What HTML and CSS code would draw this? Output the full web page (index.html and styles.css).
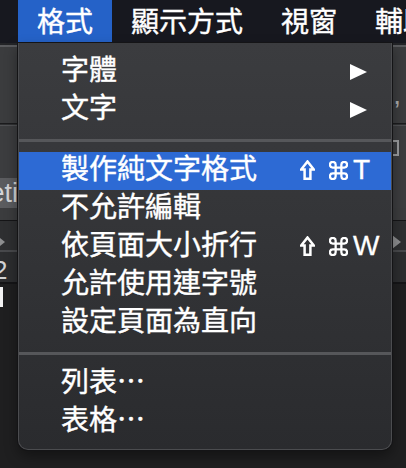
FILE: index.html
```html
<!DOCTYPE html>
<html lang="zh-Hant">
<head>
<meta charset="utf-8">
<title>格式</title>
<link rel="stylesheet" href="styles.css">
</head>
<body>
<div class="screen">
  <div class="menubar">
    <span class="mb-item active">格式</span>
    <span class="mb-item">顯示方式</span>
    <span class="mb-item">視窗</span>
    <span class="mb-item">輔助說明</span>
  </div>
  <div class="desk">
    <div class="bg">
      <div class="r r-top1"></div>
      <div class="r r-top2"></div>
      <div class="r r-tool"><span></span><span class="ghost num">3,</span></div>
      <div class="r r-l1"></div>
      <div class="r r-l2"></div>
      <div class="r r-l3"></div>
      <div class="r r-tool2"><span></span><span class="bracket"></span></div>
      <div class="r r-field"><span class="field">eti</span><span></span></div>
      <div class="r r-tool3"></div>
      <div class="r r-dark"></div>
      <div class="r r-ruler"><span class="tri tri-l"></span><span class="tri tri-r"></span></div>
      <div class="r r-l4"></div>
      <div class="r r-ruler2"><span class="ghost two">2</span><span></span></div>
      <div class="r r-l5"></div>
      <div class="r r-doc"><span class="caret"></span></div>
    </div>

    <div class="menu">
      <div class="item"><span class="label">字體</span><span class="key"><svg class="arrow" viewBox="0 0 17 16"><polygon points="0,0 17,8 0,16" /></svg></span></div>
      <div class="item"><span class="label">文字</span><span class="key"><svg class="arrow" viewBox="0 0 17 16"><polygon points="0,0 17,8 0,16" /></svg></span></div>
      <div class="sep"></div>
      <div class="item selected"><span class="label">製作純文字格式</span><span class="key"><svg class="shift" viewBox="0 0 15 20"><path d="M7.5 1.5 L13.8 9.6 H10.4 V18.8 H4.6 V9.6 H1.2 Z" /></svg><svg class="cmd" viewBox="0 0 20 20"><path d="M7 7 V4 A3 3 0 1 0 4 7 H16 A3 3 0 1 0 13 4 V16 A3 3 0 1 0 16 13 H4 A3 3 0 1 0 7 16 Z" /></svg>T</span></div>
      <div class="item"><span class="label">不允許編輯</span></div>
      <div class="item"><span class="label">依頁面大小折行</span><span class="key"><svg class="shift" viewBox="0 0 15 20"><path d="M7.5 1.5 L13.8 9.6 H10.4 V18.8 H4.6 V9.6 H1.2 Z" /></svg><svg class="cmd" viewBox="0 0 20 20"><path d="M7 7 V4 A3 3 0 1 0 4 7 H16 A3 3 0 1 0 13 4 V16 A3 3 0 1 0 16 13 H4 A3 3 0 1 0 7 16 Z" /></svg>W</span></div>
      <div class="item"><span class="label">允許使用連字號</span></div>
      <div class="item"><span class="label">設定頁面為直向</span></div>
      <div class="sep"></div>
      <div class="item"><span class="label">列表⋯</span></div>
      <div class="item"><span class="label">表格⋯</span></div>
    </div>
  </div>
</div>
</body>
</html>
```
FILE: styles.css
```css
html, body {
  margin: 0;
  padding: 0;
  background: #1f1f20;
}
body {
  width: 406px;
  height: 468px;
  overflow: hidden;
  font-family: "Noto Sans CJK TC", "Noto Sans", sans-serif;
  color: #ffffff;
}
.screen {
  width: 406px;
  height: 468px;
  display: flex;
  flex-direction: column;
  overflow: hidden;
}

/* ---------- menu bar ---------- */
.menubar {
  height: 43px;
  flex: none;
  background: #17181f;
  padding-left: 18px;
  display: flex;
  white-space: nowrap;
  overflow: hidden;
}
.mb-item {
  font-size: 28px;
  line-height: 41px;
  padding: 0 19px 2px;
  color: #ffffff;
  -webkit-text-stroke: 0.4px #ffffff;
}
.mb-item.active {
  background: #2562c8;
}

/* ---------- desk behind the menu ---------- */
.desk {
  flex: 1;
  position: relative;
}
.bg {
  display: flex;
  flex-direction: column;
  height: 100%;
}
.r {
  display: flex;
  justify-content: space-between;
  align-items: flex-start;
  flex: none;
  overflow: hidden;
}
.r-top1 { height: 2px; background: #232427; }
.r-top2 { height: 2px; background: #595a5d; }
.r-tool { height: 76px; background: #3b3c3e; }
.r-l1 { height: 1px; background: #1b1b1d; }
.r-l2 { height: 1px; background: #2f3032; }
.r-l3 { height: 1px; background: #505154; }
.r-tool2 { height: 52px; background: #3c3d3f; }
.r-field { height: 30px; background: #3c3d3f; }
.r-tool3 { height: 12px; background: #3b3c3e; }
.r-dark { height: 1px; background: #151517; }
.r-ruler { height: 29px; background: #2e2f31; }
.r-l4 { height: 2px; background: #48494c; }
.r-ruler2 { height: 30px; background: #2c2d2f; }
.r-l5 { height: 2px; background: #151517; }
.r-doc { flex: 1; background: #1f1f20; }

.ghost {
  font-family: "Liberation Sans", "Noto Sans", sans-serif;
  font-size: 28px;
  color: #a9aaac;
  line-height: 28px;
}
.num {
  margin-top: 34px;
  margin-right: 4px;
  letter-spacing: 1px;
}
.two {
  color: #d2d2d4;
  font-size: 26px;
  margin-top: 4px;
  margin-left: -7px;
}
.bracket {
  width: 8px;
  height: 12px;
  margin-top: 14px;
  margin-right: 7px;
  border: 2px solid #9a9b9d;
  border-left: none;
}
.field {
  background: #5b5c5f;
  color: #d4d4d6;
  font-family: "Liberation Sans", "Noto Sans", sans-serif;
  font-size: 27px;
  line-height: 30px;
  height: 30px;
  width: 18px;
  overflow: hidden;
  white-space: nowrap;
  direction: rtl;
  text-align: left;
}
.tri {
  width: 0;
  height: 0;
  border-top: 7px solid transparent;
  border-bottom: 7px solid transparent;
  border-left: 9px solid #8d8e90;
  margin-top: 14px;
}
.tri-l { margin-left: -4px; }
.tri-r { margin-right: 5px; }
.caret {
  width: 3px;
  height: 20px;
  margin-top: 3px;
  background: #f2f2f2;
}

/* ---------- dropdown ---------- */
.menu {
  position: absolute;
  top: 0;
  left: 18px;
  width: 374px;
  box-sizing: border-box;
  padding: 10px 0 8px;
  background: linear-gradient(#3b3c3f, #333437 50%, #2a2b2e);
  border: 1px solid #4b4c4f;
  border-top: none;
  border-radius: 0 0 10px 10px;
  box-shadow: 0 0 0 1px #141416, 0 6px 14px rgba(0, 0, 0, 0.4);
}
.item {
  display: flex;
  align-items: baseline;
  height: 38px;
  box-sizing: border-box;
  padding: 0 0 8px 42px;
  line-height: 30px;
  font-size: 28px;
  white-space: nowrap;
}
.item.selected {
  background: #2d6ad4;
}
.label {
  flex: 1;
  -webkit-text-stroke: 0.4px #ffffff;
}
.key {
  width: 91px;
  flex: none;
  font-family: "Liberation Sans", "Noto Sans", sans-serif;
  font-size: 28px;
  -webkit-text-stroke: 0.3px #ffffff;
}
.arrow {
  width: 17px;
  height: 16px;
  margin-left: 50px;
  fill: #ffffff;
}
.shift {
  width: 15px;
  height: 20px;
  margin-right: 14px;
  vertical-align: -1px;
  fill: none;
  stroke: #ffffff;
  stroke-width: 2.5;
}
.cmd {
  width: 19px;
  height: 19px;
  margin-right: 5px;
  vertical-align: -1px;
  fill: none;
  stroke: #ffffff;
  stroke-width: 2.4;
}
.sep {
  height: 3px;
  margin: 10px 0;
  background: #56575a;
}
```
